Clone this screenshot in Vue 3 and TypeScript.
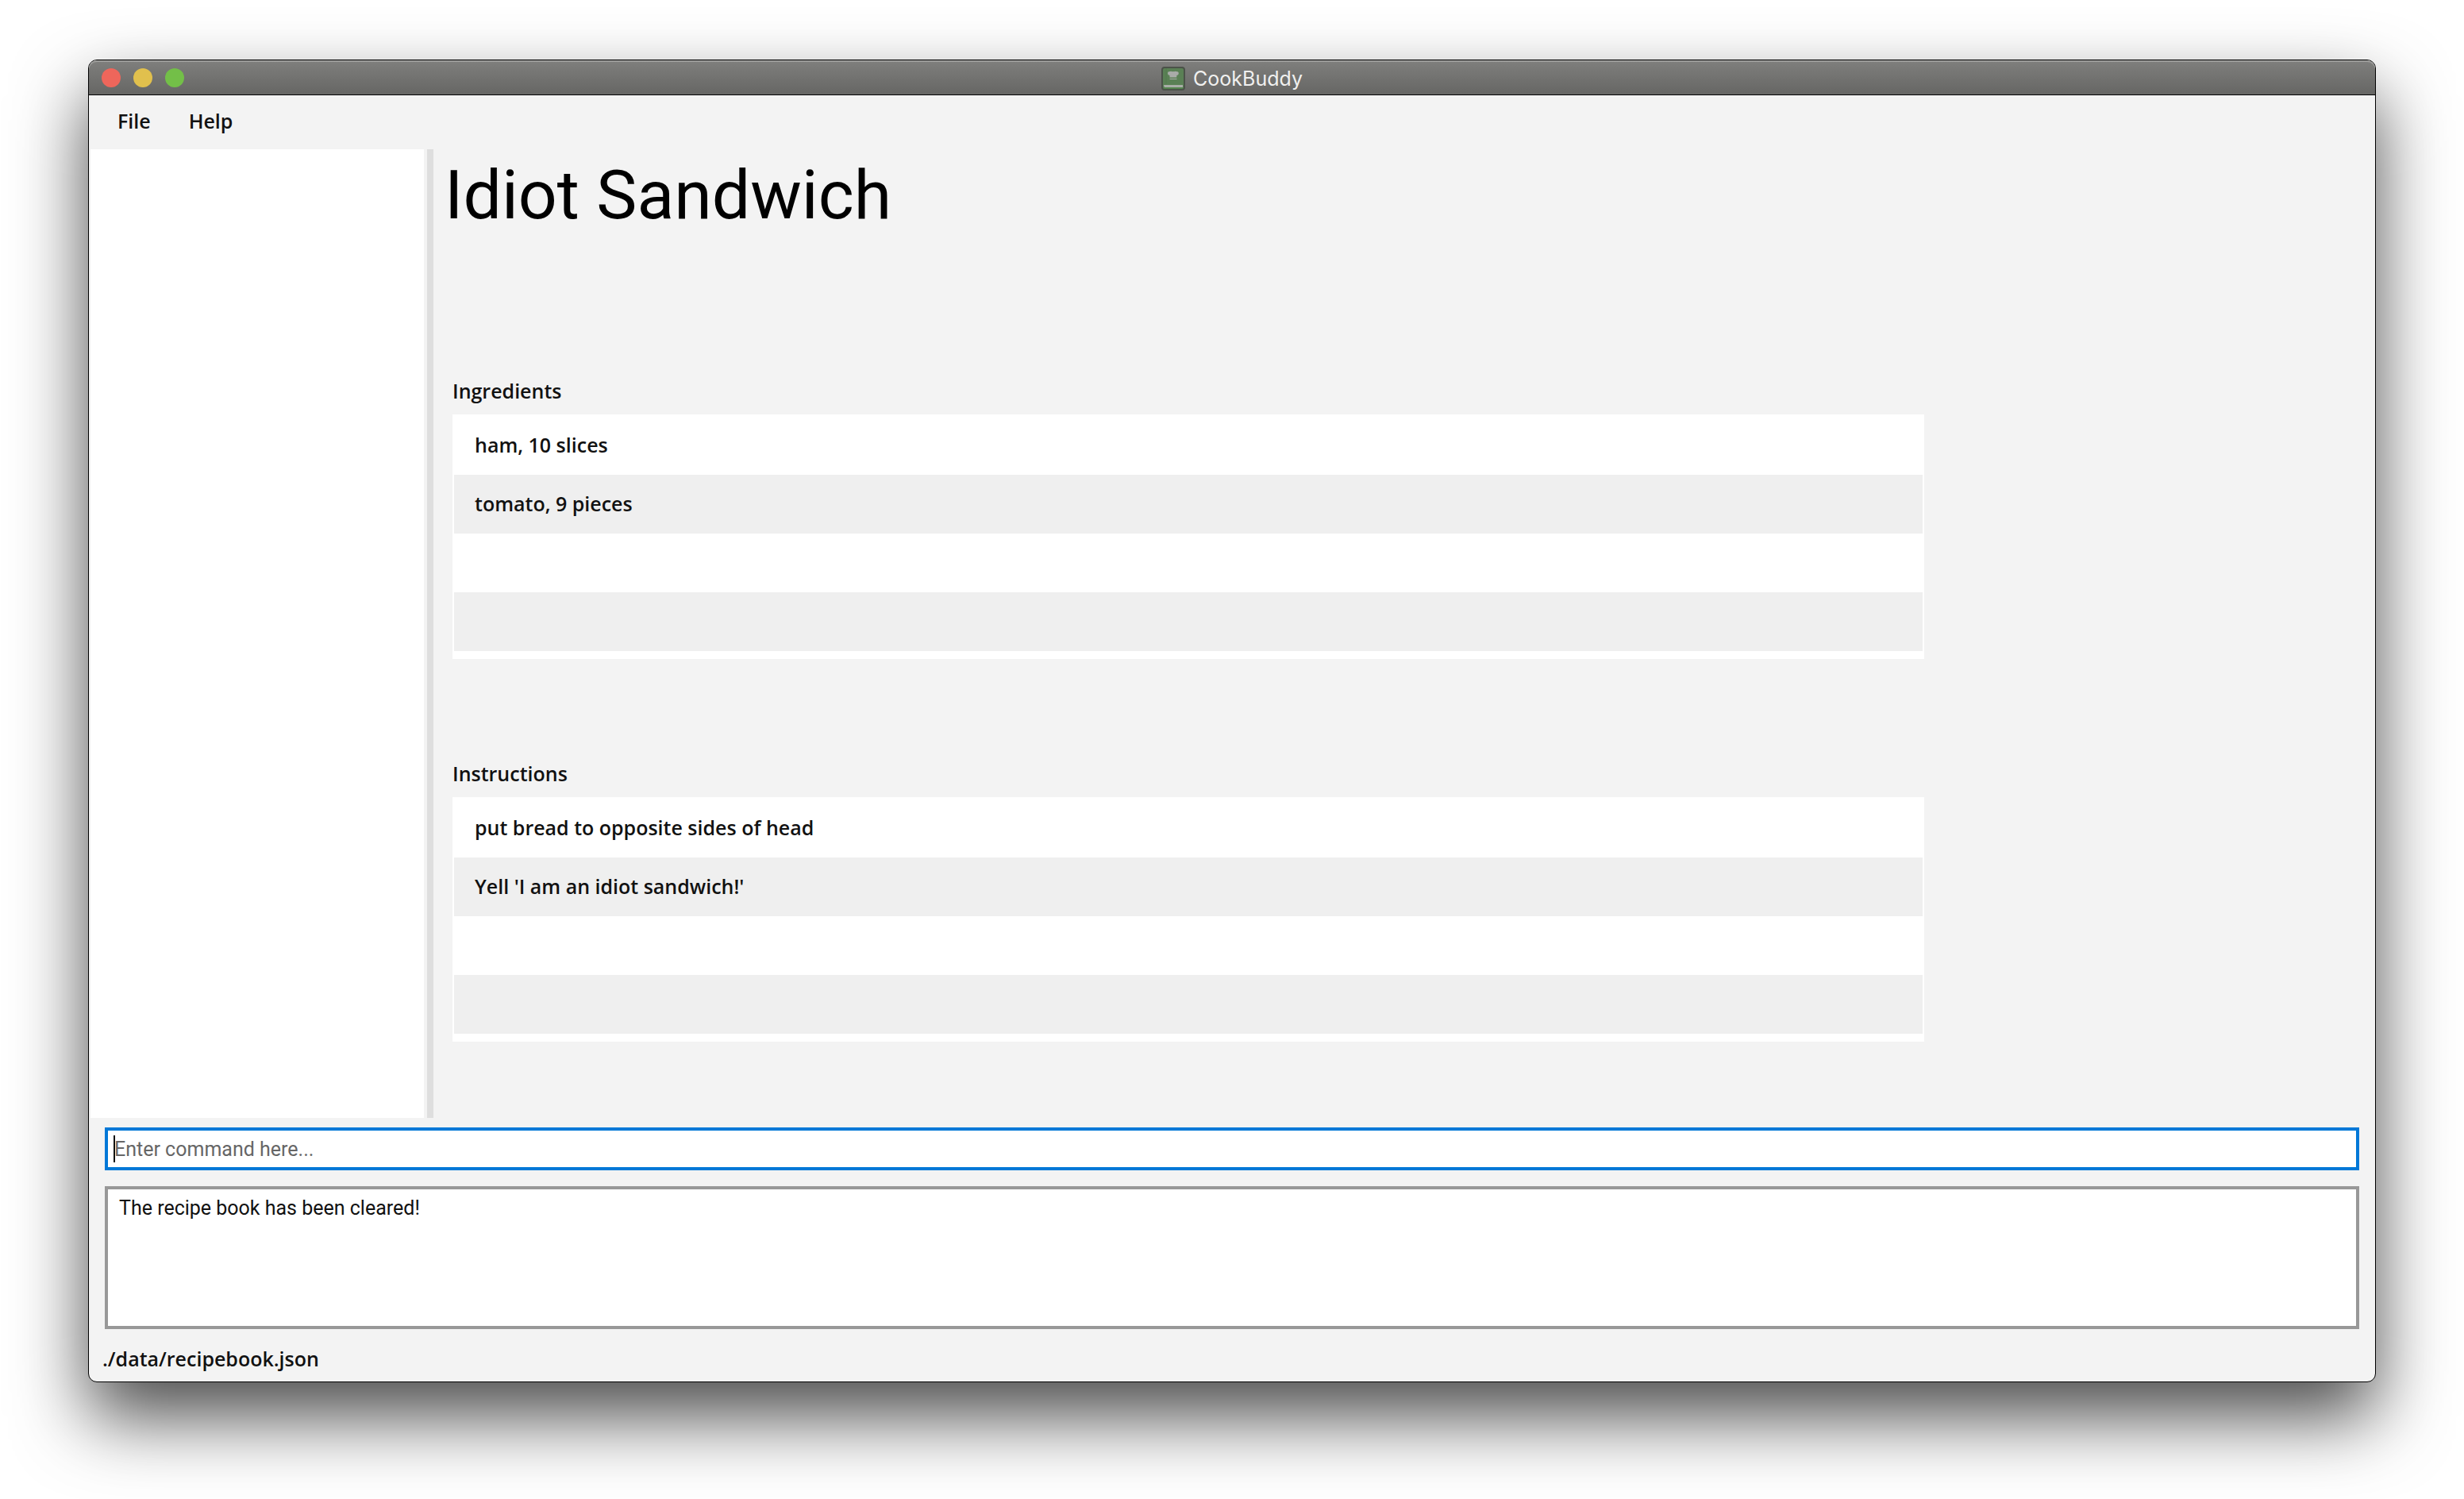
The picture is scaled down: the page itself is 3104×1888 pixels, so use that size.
<script setup lang="ts">
import { ref } from 'vue'

interface RecipeSection {
  title: string
  rows: string[]
}

const recipeName = 'Idiot Sandwich'

// Each list shows four striped rows; unused ones stay blank.
const sections: RecipeSection[] = [
  { title: 'Ingredients', rows: ['ham, 10 slices', 'tomato, 9 pieces', '', ''] },
  {
    title: 'Instructions',
    rows: ['put bread to opposite sides of head', "Yell 'I am an idiot sandwich!'", '', ''],
  },
]

const menus = ['File', 'Help']
const command = ref('')
const result = ref('The recipe book has been cleared!')
</script>

<template>
  <div class="desktop">
    <div class="window">
      <header class="titlebar">
        <div class="lights">
          <button class="light close" type="button" aria-label="Close"></button>
          <button class="light minimise" type="button" aria-label="Minimise"></button>
          <button class="light zoom" type="button" aria-label="Zoom"></button>
        </div>
        <div class="caption">
          <svg class="app-icon" viewBox="0 0 30 30" aria-hidden="true">
            <rect x="1" y="1" width="28" height="28" rx="3" fill="#5a8055" stroke="#4b5249" stroke-width="2" />
            <path d="M6 2v20" stroke="#527a4e" stroke-width="1" />
            <path d="M3 23h24v3h-23q-1-1.500-1-3z" fill="#a9aea8" />
            <path d="M3 27h24" stroke="#4f8a49" stroke-width="1" />
            <path
              d="M10.500 13.500v-2.500q-2.500-.4-2.500-2.600 0-2.400 3-2.300 1.600-.8 2.500.2 1.300-.8 2.600 0 1-.9 2.400-.2 3.300-.1 3.300 2.300 0 2.200-2.500 2.600v2.500z"
              fill="#a9aba9"
            />
            <path d="M10.500 15.500h9" stroke="#a9aba9" stroke-width="1" />
          </svg>
          <span>CookBuddy</span>
        </div>
      </header>

      <nav class="menubar">
        <button v-for="menu in menus" :key="menu" class="menu" type="button">{{ menu }}</button>
      </nav>

      <div class="workspace">
        <aside class="recipe-list"></aside>
        <div class="divider"></div>
        <main class="recipe">
          <h1>{{ recipeName }}</h1>
          <section v-for="section in sections" :key="section.title" class="section">
            <h2>{{ section.title }}</h2>
            <ul class="list">
              <li v-for="(row, i) in section.rows" :key="i">{{ row }}</li>
            </ul>
          </section>
        </main>
      </div>

      <div class="console">
        <div class="command">
          <input v-model="command" type="text" aria-label="Command" placeholder="Enter command here..." />
          <span class="caret"></span>
        </div>
        <textarea v-model="result" class="result" aria-label="Result" readonly></textarea>
      </div>

      <footer class="status">./data/recipebook.json</footer>
    </div>
  </div>
</template>

<style>
body {
  margin: 0;
  background: #fff;
}
</style>

<style scoped>
* {
  box-sizing: border-box;
}

.desktop {
  display: flex;
  min-height: 100vh;
  padding: 75px 111px 147px;
  overflow: hidden;
  color: #111;
  font: 600 25px/32px 'Open Sans', 'Noto Sans', sans-serif;
}

.window {
  display: flex;
  flex: 1;
  flex-direction: column;
  min-width: 0;
  border: 1px solid #000;
  border-radius: 11px;
  background: #f3f3f3;
  box-shadow: 0 44px 92px rgba(0, 0, 0, 0.7);
}

.titlebar {
  display: flex;
  align-items: center;
  height: 44px;
  padding: 0 16px;
  border-bottom: 1px solid #000;
  border-radius: 10px 10px 0 0;
  background: linear-gradient(#7f7f7d, #666664);
  box-shadow: inset 0 2px 0 #9c9c9a;
}

.lights {
  display: flex;
  flex: 1;
  gap: 16px;
}

.light {
  width: 24px;
  height: 24px;
  padding: 0;
  border: 0;
  border-radius: 50%;
}

.close {
  background: #ee665b;
}

.minimise {
  background: #e1c04d;
}

.zoom {
  background: #73bf48;
}

.caption {
  display: flex;
  align-items: center;
  gap: 10px;
  padding-top: 2px;
  color: #f0f0ef;
  font: 400 25px/32px Inter, sans-serif;
}

.titlebar::after {
  flex: 1;
  content: '';
}

.app-icon {
  width: 30px;
  height: 30px;
}

.menubar {
  display: flex;
  align-items: center;
  gap: 48px;
  height: 68px;
  padding: 0 36px 4px;
}

.menu {
  padding: 0;
  border: 0;
  background: none;
  color: inherit;
  font: inherit;
}

.workspace {
  display: flex;
  flex: 1;
}

.recipe-list {
  width: 420px;
  margin: 0 4px 0 2px;
  background: #fff;
}

.divider {
  width: 8px;
  background: #dedede;
}

.recipe {
  flex: 1;
  min-width: 0;
  padding: 0 568px 0 24px;
}

h1 {
  height: 288px;
  margin: 0 0 0 -10px;
  color: #000;
  font: 400 86px/116px Roboto, sans-serif;
}

h2 {
  margin: 0 0 14px;
  font: inherit;
}

.section + .section {
  margin-top: 128px;
}

.list {
  height: 308px;
  margin: 0;
  padding: 2px;
  background: #fff;
  list-style: none;
}

.list li {
  height: 74px;
  padding: 0 26px;
  line-height: 72px;
}

.list li:nth-child(even) {
  background: #efefef;
}

.console {
  display: flex;
  flex-direction: column;
  gap: 20px;
  padding: 12px 20px 0;
}

.command {
  position: relative;
  display: flex;
}

.command input,
.result {
  width: 100%;
  border: 4px solid #989898;
  border-radius: 0;
  outline: 0;
  background: #fff;
  color: #111;
  font: 400 25px/32px Roboto, sans-serif;
}

.command input {
  height: 54px;
  padding: 0 8px;
  border-color: #0078d7;
}

.command input::placeholder {
  color: #666;
  opacity: 1;
}

.caret {
  position: absolute;
  top: 10px;
  left: 11px;
  width: 2px;
  height: 34px;
  background: #111;
}

.result {
  display: block;
  height: 180px;
  padding: 8px 14px;
  resize: none;
}

.status {
  padding: 21px 17px 13px;
}
</style>
